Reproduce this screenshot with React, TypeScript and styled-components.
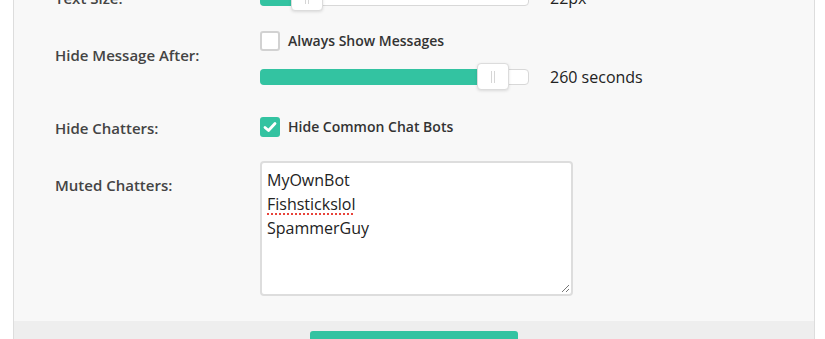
import React from "react";
import styled, { createGlobalStyle } from "styled-components";

const GlobalStyle = createGlobalStyle`
  html, body { margin: 0; padding: 0; background: #ffffff; }
  body { font-family: "Open Sans", "Liberation Sans", sans-serif; overflow: hidden; }
  * { box-sizing: border-box; }
`;

const TEAL = "#33c3a1";

const Page = styled.div`
  width: 802px;
  margin: -13px 0 0 13px;
`;

const Panel = styled.div`
  background: #f8f8f8;
  border-left: 1px solid #dddddd;
  border-right: 1px solid #dddddd;
`;

const Body = styled.div`
  display: flex;
  flex-direction: column;
  padding: 0 0 25px 41px;
`;

const Row = styled.div<{ $mt?: number }>`
  display: grid;
  grid-template-columns: 205px 1fr;
  align-items: start;
  margin-top: ${(p) => p.$mt ?? 0}px;
`;

const Label = styled.div<{ $pt?: number }>`
  font-size: 15px;
  line-height: 22px;
  font-weight: 600;
  color: #444444;
  padding-top: ${(p) => p.$pt ?? 0}px;
`;

const Controls = styled.div<{ $gap?: number }>`
  display: flex;
  flex-direction: column;
  align-items: flex-start;
  gap: ${(p) => p.$gap ?? 0}px;
`;

const SliderLine = styled.div`
  display: flex;
  align-items: center;
`;

const Track = styled.div`
  position: relative;
  width: 269px;
  height: 16px;
  background: #ffffff;
  border: 1px solid #d8d8d8;
  border-radius: 4px;
`;

const Fill = styled.div`
  position: absolute;
  left: -1px;
  top: -1px;
  bottom: -1px;
  background: ${TEAL};
  border-radius: 4px 0 0 4px;
`;

const Handle = styled.div`
  position: absolute;
  top: -7px;
  width: 32px;
  height: 27px;
  background: #ffffff;
  border: 1px solid #dcdcdc;
  border-radius: 4px;
  box-shadow: 0 1px 3px rgba(0, 0, 0, 0.12);
  display: flex;
  justify-content: center;
  align-items: center;
  gap: 2px;
`;

const Grip = styled.span`
  display: block;
  width: 1px;
  height: 12px;
  background: #d6d6d6;
`;

const Value = styled.span`
  margin-left: 21px;
  font-size: 16px;
  line-height: 22px;
  color: #222222;
`;

const CheckRow = styled.label`
  display: flex;
  align-items: center;
  gap: 8px;
  font-size: 14px;
  line-height: 20px;
  font-weight: 600;
  color: #333333;
`;

const Box = styled.span<{ $checked?: boolean }>`
  width: 20px;
  height: 20px;
  border-radius: 3px;
  border: ${(p) => (p.$checked ? "none" : "2px solid #d2d2d2")};
  background: ${(p) => (p.$checked ? TEAL : "#ffffff")};
  display: flex;
  align-items: center;
  justify-content: center;
`;

const TextBox = styled.div`
  position: relative;
  width: 313px;
  height: 135px;
  background: #ffffff;
  border: 2px solid #dddddd;
  border-radius: 4px;
  padding: 5px 5px;
  font-size: 16px;
  line-height: 24px;
  color: #222222;
`;

const Line = styled.div``;

const Misspelled = styled.span`
  text-decoration: underline dotted #e8433a;
  text-decoration-thickness: 2px;
  text-underline-offset: 3px;
`;

const ResizeGrip = styled.svg`
  position: absolute;
  right: 1px;
  bottom: 1px;
`;

const Footer = styled.div`
  background: #eeeeee;
  display: flex;
  justify-content: center;
  padding: 10px 0 12px;
`;

const Button = styled.button`
  width: 208px;
  height: 40px;
  border: none;
  border-radius: 3px;
  background: ${TEAL};
  color: #ffffff;
  font-family: "Open Sans", "Liberation Sans", sans-serif;
  font-size: 16px;
  font-weight: 600;
`;

type SliderProps = { fill: number; handle: number; value: string };

const Slider: React.FC<SliderProps> = ({ fill, handle, value }) => (
  <SliderLine>
    <Track>
      <Fill style={{ width: fill }} />
      <Handle style={{ left: handle }}>
        <Grip />
        <Grip />
      </Handle>
    </Track>
    <Value>{value}</Value>
  </SliderLine>
);

const Checkbox: React.FC<{ checked?: boolean; label: string }> = ({ checked, label }) => (
  <CheckRow>
    <Box $checked={checked}>
      {checked && (
        <svg width="14" height="12" viewBox="0 0 14 12">
          <polyline
            points="2,6.5 5.5,9.5 12,2.5"
            fill="none"
            stroke="#ffffff"
            strokeWidth="2.8"
            strokeLinecap="round"
            strokeLinejoin="round"
          />
        </svg>
      )}
    </Box>
    {label}
  </CheckRow>
);

export default function App() {
  return (
    <>
      <GlobalStyle />
      <Page>
        <Panel>
          <Body>
            <Row>
              <Label>Text Size:</Label>
              <Controls>
                <Slider fill={34} handle={30} value="22px" />
              </Controls>
            </Row>
            <Row $mt={22}>
              <Label $pt={13}>Hide Message After:</Label>
              <Controls $gap={15}>
                <Checkbox label="Always Show Messages" />
                <Slider fill={225} handle={216} value="260 seconds" />
              </Controls>
            </Row>
            <Row $mt={29}>
              <Label>Hide Chatters:</Label>
              <Controls>
                <Checkbox checked label="Hide Common Chat Bots" />
              </Controls>
            </Row>
            <Row $mt={22}>
              <Label $pt={13}>Muted Chatters:</Label>
              <Controls>
                <TextBox role="textbox" aria-multiline="true">
                  <Line>MyOwnBot</Line>
                  <Line>
                    <Misspelled>Fishstickslol</Misspelled>
                  </Line>
                  <Line>SpammerGuy</Line>
                  <ResizeGrip width="9" height="9" viewBox="0 0 9 9">
                    <line x1="8" y1="1" x2="1" y2="8" stroke="#777" strokeWidth="1" />
                    <line x1="8" y1="5" x2="5" y2="8" stroke="#777" strokeWidth="1" />
                  </ResizeGrip>
                </TextBox>
              </Controls>
            </Row>
          </Body>
          <Footer>
            <Button>Save Settings</Button>
          </Footer>
        </Panel>
      </Page>
    </>
  );
}
